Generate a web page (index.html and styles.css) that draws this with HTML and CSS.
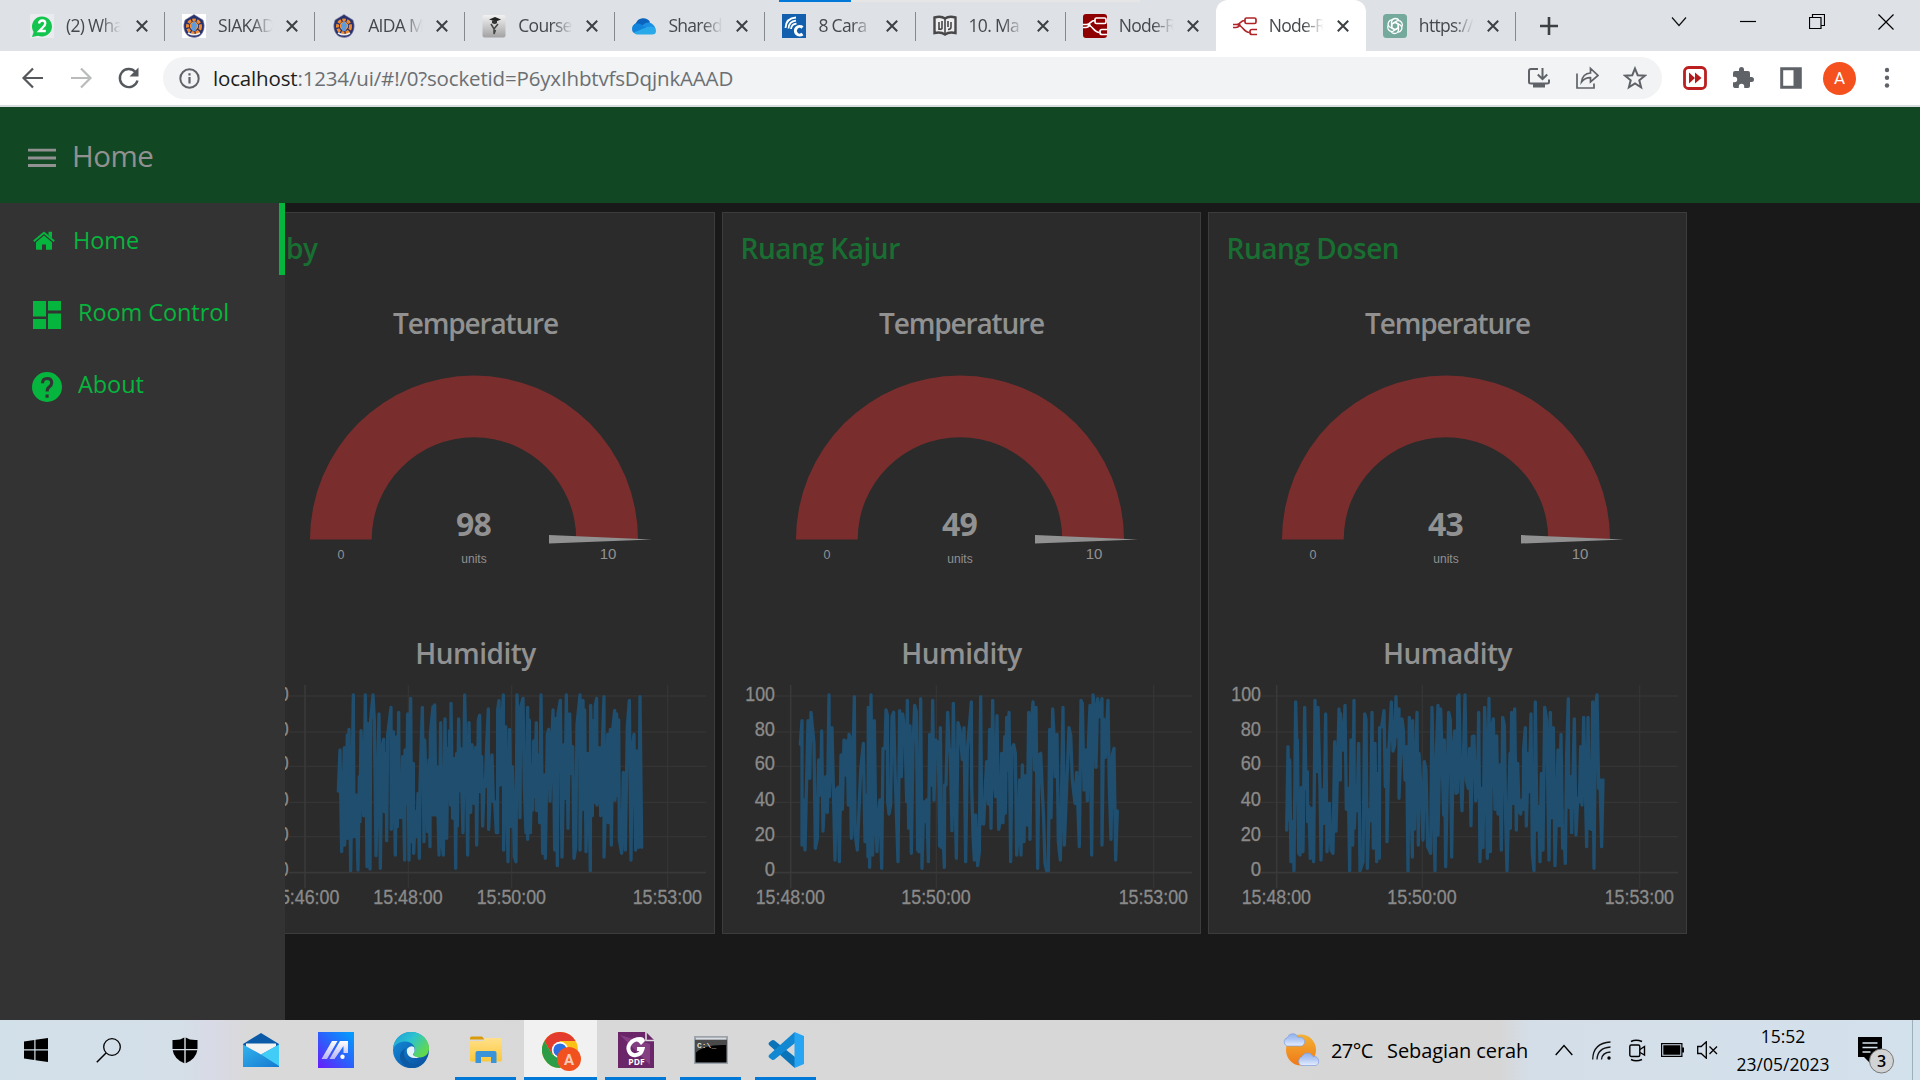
FILE: index.html
```html
<!DOCTYPE html>
<html lang="id">
<head>
<meta charset="utf-8">
<title>Node-RED Dashboard</title>
<link rel="stylesheet" href="styles.css">
</head>
<body>
<svg class="defs" width="0" height="0">
  <defs>
    <linearGradient id="gSun" x1="0" y1="0" x2="0" y2="1"><stop offset="0" stop-color="#f3b233"/><stop offset="1" stop-color="#f07818"/></linearGradient>
    <linearGradient id="gCloud" x1="0" y1="0" x2="0" y2="1"><stop offset="0" stop-color="#8fb0ec"/><stop offset=".5" stop-color="#b3c9f5"/><stop offset="1" stop-color="#e6eefc"/></linearGradient>
    <linearGradient id="gMa" x1="0" y1="1" x2="1" y2="0"><stop offset="0" stop-color="#6a1bfb"/><stop offset=".5" stop-color="#2b61fb"/><stop offset="1" stop-color="#00a2fd"/></linearGradient>
    <linearGradient id="gLetter" x1="0" y1="0" x2="0" y2="1"><stop offset="0" stop-color="#fff"/><stop offset="1" stop-color="#b9b4f5"/></linearGradient>
    <linearGradient id="gEdgeTop" x1="0" y1="0" x2="1" y2=".6"><stop offset="0" stop-color="#1d9bd8"/><stop offset=".5" stop-color="#2cc3d0"/><stop offset="1" stop-color="#62d84c"/></linearGradient>
    <linearGradient id="gEdgeBot" x1="0" y1="0" x2="1" y2="1"><stop offset="0" stop-color="#1391de"/><stop offset="1" stop-color="#0b4a9b"/></linearGradient>
    <linearGradient id="gFolder" x1="0" y1="0" x2="0" y2="1"><stop offset="0" stop-color="#ffe08a"/><stop offset="1" stop-color="#fbc83c"/></linearGradient>
    <linearGradient id="gMail" x1="0" y1="0" x2="1" y2="1"><stop offset="0" stop-color="#32b4ee"/><stop offset="1" stop-color="#1679d0"/></linearGradient>
    <linearGradient id="gFav" x1="0" y1="0" x2="0" y2="1"><stop offset="0" stop-color="#f2f2f2"/><stop offset="1" stop-color="#a2a2a2"/></linearGradient>
    <symbol id="x" viewBox="0 0 14 14"><path d="M1.8 1.8l10.4 10.4M12.2 1.8L1.8 12.2" stroke="#3c4043" stroke-width="2" fill="none"/></symbol>
    <symbol id="crest" viewBox="0 0 24 24"><path d="M12 .5l9 5.500q2 5 .8 9.500-1 4.500-5 7-4 1.800-9.600 0-4-2.500-5-7Q1 11 3 6z" fill="#26316f" stroke="#8d8ba8" stroke-width=".6"/><circle cx="12" cy="12.500" r="6.500" fill="none" stroke="#f08a2c" stroke-width="3" stroke-dasharray="3.400 1.300"/><circle cx="12" cy="12" r="4.200" fill="#f7943c"/><path d="M12 7l3 4-1.400 6h-3.200L9 11z" fill="#5b9be0"/><path d="M6 19q6 3.500 12 0" stroke="#eee" stroke-width="1.500" fill="none"/></symbol>
    <symbol id="nodes" viewBox="0 0 24 24"><g fill="none" stroke="currentColor" stroke-width="1.700"><rect x="12" y="4" width="11" height="5.500" rx="1.500"/><path d="M0 10.500h3.500c5 0 3-4 8.500-4M3.500 10.500c6 0 7 8 13 8M0 13.500h3c3 0 3-2 4.500-3"/><path d="M24 15.500h-5q-2 0-2 2v1q0 2 2 2h5"/></g></symbol>
  </defs>
</svg>

<header class="tabstrip">
  <span class="progress"><i></i></span>
  <div class="tab first"><svg class="fav" viewBox="0 0 24 24"><path d="M0 0h24v24H0z" fill="#fff" opacity=".35"/><path d="M2 23l1.600-5A10 10 0 1 1 8 21.700z" fill="#13c54e"/><path d="M9 9.500q.5-3 3.300-3 3 0 3 2.700 0 2-2.600 4.300L9.300 17h6.500" fill="none" stroke="#fff" stroke-width="2.300"/></svg><span class="name">(2) Wha</span><svg class="close"><use href="#x"/></svg></div>
  <div class="tab"><svg class="fav onwhite"><use href="#crest"/></svg><span class="name">SIAKAD</span><svg class="close"><use href="#x"/></svg></div>
  <div class="tab"><svg class="fav"><use href="#crest"/></svg><span class="name">AIDA M</span><svg class="close"><use href="#x"/></svg></div>
  <div class="tab"><svg class="fav" viewBox="0 0 24 24"><rect x=".5" y="1" width="23" height="22.500" rx="2" fill="url(#gFav)"/><path d="M7 5.500L13 3l6 2.500-5 2z" fill="#222"/><path d="M10 6.500v2.500q3 2 5 0V6.500z" fill="#333"/><path d="M9 10l3 5 4-5M12 15v5l1.500-4" fill="none" stroke="#444" stroke-width="1.500"/></svg><span class="name">Course</span><svg class="close"><use href="#x"/></svg></div>
  <div class="tab"><svg class="fav" viewBox="0 0 24 24"><path d="M3 17a5 5 0 0 1 1-8 8 8 0 0 1 14-1l-6 9z" fill="#0b63bd"/><path d="M0 15q0-5 5-5.500 4-.5 8 4l8 6H5q-5 0-5-4.500z" fill="#1283da"/><path d="M17 8.500q5 1 6.500 6.500l-8-1L10 12q3-4 7-3.500z" fill="#1b8fe3"/><path d="M2 18.500L15 13q9-2 9 4 0 3.500-4 3.500H5q-2 0-3-2z" fill="#29a9ea"/></svg><span class="name">Shared</span><svg class="close"><use href="#x"/></svg></div>
  <div class="tab"><svg class="fav" viewBox="0 0 24 24"><path d="M0 0h24v24H0z" fill="#1260ad"/><g fill="none" stroke="#fff"><path d="M20.500 13.500a4.300 4.300 0 1 0 0 6.500" stroke-width="3"/><path d="M3.500 14Q4 4 14 3.500M6.500 14.500Q7 7.500 14 6.700M9 15q.5-5 5.500-5.400" stroke-width="1.800"/></g></svg><span class="name">8 Cara</span><svg class="close"><use href="#x"/></svg></div>
  <div class="tab"><svg class="fav" viewBox="0 0 24 24"><path d="M1.500 3.500Q8 1.500 12 4.500q4-3 10.500-1V19Q16 17.500 12 20.500 8 17.500 1.500 19z" fill="#eee" stroke="#48484a" stroke-width="2.400"/><path d="M12 4.500v16M6 8v8M9 7v7.500q-1 1.500-3 0M15 7v6M18 8v5q0 2.500-3 2.500" fill="none" stroke="#48484a" stroke-width="1.600"/></svg><span class="name">10. Ma</span><svg class="close"><use href="#x"/></svg></div>
  <div class="tab last-before"><svg class="fav red"><use href="#nodes"/></svg><span class="name">Node-R</span><svg class="close"><use href="#x"/></svg></div>
  <div class="tab active"><svg class="fav redline"><use href="#nodes"/></svg><span class="name">Node-R</span><svg class="close"><use href="#x"/></svg></div>
  <div class="tab"><svg class="fav" viewBox="0 0 24 24"><rect width="24" height="24" rx="3.500" fill="#75a99c"/><g fill="none" stroke="#fff" stroke-width="1.300"><path id="petal" d="M12 8.500l3.500 2v5.500q-.5 3.500-4 3.500-2.500 0-3.500-2"/><use href="#petal" transform="rotate(60 12 12)"/><use href="#petal" transform="rotate(120 12 12)"/><use href="#petal" transform="rotate(180 12 12)"/><use href="#petal" transform="rotate(240 12 12)"/><use href="#petal" transform="rotate(300 12 12)"/></g></svg><span class="name">https://</span><svg class="close"><use href="#x"/></svg></div>
  <svg class="plus" viewBox="0 0 18 18"><path d="M9 0v18M0 9h18" stroke="#3c4043" stroke-width="2.600"/></svg>
  <div class="winctl">
    <svg width="16" height="44" viewBox="0 0 16 44"><path d="M1 17.500l7 8 7-8" fill="none" stroke="#111" stroke-width="1.200"/></svg>
    <svg width="16" height="44" viewBox="0 0 16 44"><path d="M0 21.500h16" stroke="#000" stroke-width="1.200"/></svg>
    <svg width="16" height="44" viewBox="0 0 16 44"><path d="M.5 17.500h11.500v11H.5zM3.500 17.500v-3h12v11H12" fill="none" stroke="#000" stroke-width="1.200"/></svg>
    <svg width="16" height="44" viewBox="0 0 16 44"><path d="M.5 14.500l15 15M15.500 14.500l-15 15" stroke="#000" stroke-width="1.200"/></svg>
  </div>
</header>

<nav class="toolbar">
  <svg class="back" viewBox="0 0 24 24"><path d="M22 12H3M12 2.500L2.500 12l9.500 9.500" fill="none" stroke="#55595d" stroke-width="2.200"/></svg>
  <svg class="fwd" viewBox="0 0 24 24"><path d="M2 12h19M12 2.500l9.500 9.500-9.500 9.500" fill="none" stroke="#b9bbbd" stroke-width="2.200"/></svg>
  <svg class="reload" viewBox="0 0 24 24"><path d="M20.500 14.500A9 9 0 1 1 18.500 6" fill="none" stroke="#55595d" stroke-width="2.400"/><path d="M21.500 1.500v9h-9z" fill="#55595d"/></svg>
  <div class="omnibox">
    <svg width="21" height="21" viewBox="0 0 21 21"><circle cx="10.500" cy="10.500" r="9.200" fill="none" stroke="#5f6368" stroke-width="2"/><path d="M10.500 9v6.500M10.500 5.200v2.300" stroke="#5f6368" stroke-width="2.200"/></svg>
    <span class="url"><b>localhost</b>:1234/ui/#!/0?socketid=P6yxIhbtvfsDqjnkAAAD</span>
    <span class="pageacts">
      <svg viewBox="0 0 24 24"><path d="M11 3H4q-2 0-2 2v11q0 1.500 2 1.500h16q2 0 2-1.500v-2.500M15.500 2v10M10.800 8.500l4.700 4.700 4.700-4.700" fill="none" stroke="#5f6368" stroke-width="2"/><path d="M6 18h12v3.500H6z" fill="#5f6368"/></svg>
      <svg viewBox="0 0 24 24"><path d="M2 7.500v14.500h17v-4.500M6.500 16q1-8.500 9-9V2.500l7.500 7-7.500 6.500v-4.300Q10 11.500 6.500 16z" fill="none" stroke="#5f6368" stroke-width="1.700"/></svg>
      <svg viewBox="0 0 24 24"><path d="M12 2.500l2.700 6.700 7.100.5-5.500 4.600 1.800 7L12 17.400l-6.100 3.900 1.800-7L2.200 9.700l7.100-.5z" fill="none" stroke="#5f6368" stroke-width="2"/></svg>
    </span>
  </div>
  <div class="exts">
    <svg viewBox="0 0 24 24"><rect x="1.500" y="1.500" width="21" height="21" rx="4" fill="#fff" stroke="#bb1f1f" stroke-width="2.800"/><path d="M6 6.500l6 5.500-6 5.500zM12 6.500l6.500 5.500-6.500 5.500z" fill="#b31c1c"/></svg>
    <svg viewBox="0 0 24 24"><path d="M20.500 11H19V7a2 2 0 0 0-2-2h-4V3.500a2.500 2.500 0 0 0-5 0V5H4a2 2 0 0 0-2 2v3.800h1.500a2.700 2.700 0 0 1 0 5.400H2V20a2 2 0 0 0 2 2h3.800v-1.500a2.700 2.700 0 0 1 5.400 0V22H17a2 2 0 0 0 2-2v-4h1.500a2.500 2.500 0 0 0 0-5z" fill="#5f6368"/></svg>
    <svg viewBox="0 0 24 24"><path d="M2.700 2.700h18.600v18.600H2.700z" fill="none" stroke="#5f6368" stroke-width="3"/><path d="M14.500 3h7v18h-7z" fill="#5f6368"/></svg>
    <span class="avatar">A</span>
    <svg viewBox="0 0 24 24"><g fill="#5f6368"><circle cx="12" cy="4" r="2.200"/><circle cx="12" cy="11.700" r="2.200"/><circle cx="12" cy="19.500" r="2.200"/></g></svg>
  </div>
</nav>

<section class="appbar">
  <svg width="28" height="20" viewBox="0 0 28 20"><path d="M0 2.200h28M0 10h28M0 17.500h28" stroke="#919191" stroke-width="2.800"/></svg>
  <h1>Home</h1>
</section>

<main class="stage">
  <aside class="menu">
    <a class="item on"><svg width="22" height="19" viewBox="0 0 22 19"><path d="M11 4.500l8 6.800V18q0 .8-.8.800H13v-5.300H9v5.300H3.800Q3 18.800 3 18v-6.700z" fill="#06b53d"/><path d="M.8 10.200L11 1.700l10.200 8.500" fill="none" stroke="#06b53d" stroke-width="2"/><path d="M15.500.800H19v6.500l-3.500-3z" fill="#06b53d"/></svg><span>Home</span></a>
    <a class="item"><svg width="28" height="28" viewBox="0 0 28 28"><path d="M0 0h13v15.500H0zM15 0h13v9.500H15zM0 18h13v10H0zM15 12.500h13V28H15z" fill="#06b53d"/></svg><span>Room Control</span></a>
    <a class="item about"><svg width="30" height="30" viewBox="0 0 30 30"><circle cx="15" cy="15" r="15" fill="#06b53d"/><path d="M10.500 11.200q0-4.700 4.700-4.700 4.500 0 4.500 4.300 0 2.200-2.300 4-2.300 1.700-2.300 4.700M15.100 22.500v3.300" fill="none" stroke="#333" stroke-width="3.100"/></svg><span>About</span></a>
  </aside>

  <article class="card">
    <h2>Loby</h2>
    <h3 class="t">Temperature</h3>
    <svg class="gauge" viewBox="0 0 477 265"><path class="arc" d="M73 178.500a164 164 0 0 1 328 0h-61.700a102.300 102.300 0 0 0-204.600 0z"/><path class="needle" d="M312 174l103 4.500-103 4z"/><text class="num" x="236.500" y="174.500">98</text><text class="unit" x="237" y="202">units</text><text class="min" x="104" y="198">0</text><text class="max" x="371" y="198">10</text></svg>
    <h3 class="h">Humidity</h3>
    <svg class="chart" viewBox="-129 180 1431 720">
      <path class="grid" d="M26 228H1278M26 336H1278M26 439H1278M26 547H1278M26 650H1278M385 195V805M695 195V805M1163 195V805"/><path class="axis" d="M75 195V805M26 758H1278"/>
      <g class="yl"><text x="26" y="242" textLength="85" lengthAdjust="spacingAndGlyphs">100</text><text x="26" y="347" textLength="58" lengthAdjust="spacingAndGlyphs">80</text><text x="26" y="450" textLength="58" lengthAdjust="spacingAndGlyphs">60</text><text x="26" y="559" textLength="58" lengthAdjust="spacingAndGlyphs">40</text><text x="26" y="662" textLength="58" lengthAdjust="spacingAndGlyphs">20</text><text x="26" y="769" textLength="28" lengthAdjust="spacingAndGlyphs">0</text></g>
      <g class="xl"><text x="74" y="853" textLength="208" lengthAdjust="spacingAndGlyphs">15:46:00</text><text x="384" y="853" textLength="208" lengthAdjust="spacingAndGlyphs">15:48:00</text><text x="694" y="853" textLength="208" lengthAdjust="spacingAndGlyphs">15:50:00</text><text x="1162" y="853" textLength="208" lengthAdjust="spacingAndGlyphs">15:53:00</text></g>
      <polyline points="175,513 180,390 185,695 193,383 194,675 202,345 203,655 207,328 212,752 220,225 222,650 228,525 234,750 238,470 240,605 243,332 251,587 256,225 261,740 263,310 270,747 272,300 279,225 283,300 288,707 297,282 301,745 306,380 311,358 313,575 318,400 320,662 323,345 333,262 334,628 340,335 346,705 350,350 352,620 356,277 358,592 365,592 368,410 374,720 375,390 380,550 383,282 387,720 392,235 395,665 400,430 401,700 406,575 411,650 414,520 418,715 420,500 427,262 432,665 434,360 443,635 447,420 450,680 451,343 459,260 460,585 464,255 468,585 471,440 477,705 482,308 485,660 490,705 495,297 500,655 504,385 506,500 509,332 512,555 513,250 518,595 524,415 527,745 530,400 532,618 536,297 540,512 542,385 549,638 554,225 560,500 563,705 567,308 572,577 576,374 582,550 587,382 590,675 595,300 599,286 601,515 605,410 608,618 613,480 616,500 620,374 625,267 626,628 636,405 640,545 644,545 649,638 653,638 653,270 657,242 661,495 666,300 670,225 671,690 677,320 684,725 689,328 694,620 697,440 700,540 703,710 708,725 711,225 717,400 720,593 722,262 729,235 733,500 738,638 743,262 743,658 748,300 751,638 756,435 758,570 761,363 763,530 769,308 770,572 776,405 779,608 783,225 788,700 793,465 796,715 802,343 806,328 810,543 814,405 819,270 824,690 828,295 832,737 834,282 841,241 846,711 852,374 855,535 859,225 864,625 869,282 873,460 878,380 882,715 887,683 891,313 900,225 900,690 909,241 911,568 914,270 918,695 924,400 931,752 932,256 937,587 938,302 943,547 946,256 950,235 951,555 959,383 962,587 968,343 972,230 972,711 979,470 983,343 985,608 991,328 994,675 998,330 1004,271 1005,540 1010,282 1011,527 1016,300 1018,660 1025,700 1030,457 1036,690 1042,320 1048,241 1053,720 1057,385 1062,343 1067,690 1071,393 1076,682 1080,230 1085,682"/>
    </svg>
  </article>

  <article class="card">
    <h2>Ruang Kajur</h2>
    <h3 class="t">Temperature</h3>
    <svg class="gauge" viewBox="0 0 477 265"><path class="arc" d="M73 178.500a164 164 0 0 1 328 0h-61.700a102.300 102.300 0 0 0-204.600 0z"/><path class="needle" d="M312 174l103 4.500-103 4z"/><text class="num" x="236.500" y="174.500">49</text><text class="unit" x="237" y="202">units</text><text class="min" x="104" y="198">0</text><text class="max" x="371" y="198">10</text></svg>
    <h3 class="h">Humidity</h3>
    <svg class="chart" viewBox="24 180 1431 720">
      <path class="grid" d="M178 228H1431M178 336H1431M178 439H1431M178 547H1431M178 650H1431M664 195V805M1316 195V805"/><path class="axis" d="M227 195V805M178 758H1431"/>
      <g class="yl"><text x="180" y="242" textLength="89" lengthAdjust="spacingAndGlyphs">100</text><text x="180" y="347" textLength="61" lengthAdjust="spacingAndGlyphs">80</text><text x="180" y="450" textLength="61" lengthAdjust="spacingAndGlyphs">60</text><text x="180" y="559" textLength="61" lengthAdjust="spacingAndGlyphs">40</text><text x="180" y="662" textLength="61" lengthAdjust="spacingAndGlyphs">20</text><text x="180" y="769" textLength="31" lengthAdjust="spacingAndGlyphs">0</text></g>
      <g class="xl"><text x="226" y="853" textLength="208" lengthAdjust="spacingAndGlyphs">15:48:00</text><text x="663" y="853" textLength="208" lengthAdjust="spacingAndGlyphs">15:50:00</text><text x="1315" y="853" textLength="208" lengthAdjust="spacingAndGlyphs">15:53:00</text></g>
      <polyline points="256,373 261,302 261,675 266,540 270,690 279,302 284,475 288,277 297,370 301,685 307,655 311,420 317,525 320,333 324,633 332,470 337,577 342,225 343,530 351,323 360,720 364,510 369,502 373,725 378,405 382,568 387,360 392,465 396,362 400,555 402,343 405,350 409,655 418,230 420,640 427,690 437,450 445,370 450,665 455,525 459,710 460,262 464,742 468,225 473,705 478,302 482,600 486,695 490,580 495,540 500,745 504,385 510,385 513,270 517,285 518,545 522,582 527,555 531,290 536,277 540,450 549,725 554,272 559,470 563,282 570,340 575,545 577,241 581,625 585,318 589,700 594,380 599,256 604,275 608,690 612,695 617,236 621,745 626,545 631,605 635,540 640,725 644,343 650,495 653,241 657,540 662,360 670,370 674,678 676,323 680,683 684,640 688,742 689,495 693,495 698,277 702,380 706,400 711,632 715,250 724,715 729,308 735,330 742,418 747,323 752,725 757,390 765,297 769,246 770,500 774,640 778,720 782,585 788,737 793,695 797,230 800,610 806,612 812,480 815,425 820,552 824,328 828,625 833,241 837,480 842,530 846,287 851,628 856,600 860,400 864,608 869,350 871,580 875,292 878,450 882,277 887,725 891,385 896,374 901,400 905,705 910,640 914,480 918,705 922,435 927,665 931,467 937,615 941,277 945,658 949,310 954,246 959,450 963,262 968,745 972,405 977,400 981,490 986,600 990,730 995,752 1000,752 1004,328 1008,593 1013,267 1017,345 1021,470 1026,343 1030,665 1036,720 1044,262 1048,675 1055,500 1062,323 1067,345 1072,480 1080,550 1085,457 1093,680 1098,241 1102,250 1107,510 1112,390 1117,542 1121,350 1125,256 1130,705 1134,225 1139,262 1143,442 1148,236 1155,290 1161,236 1161,675 1166,297 1171,412 1179,241 1183,500 1188,658 1192,405 1197,385 1202,720 1207,573"/>
    </svg>
  </article>

  <article class="card">
    <h2>Ruang Dosen</h2>
    <h3 class="t">Temperature</h3>
    <svg class="gauge" viewBox="0 0 477 265"><path class="arc" d="M73 178.500a164 164 0 0 1 328 0h-61.700a102.300 102.300 0 0 0-204.600 0z"/><path class="needle" d="M312 174l103 4.500-103 4z"/><text class="num" x="236.500" y="174.500">43</text><text class="unit" x="237" y="202">units</text><text class="min" x="104" y="198">0</text><text class="max" x="371" y="198">10</text></svg>
    <h3 class="h">Humadity</h3>
    <svg class="chart" viewBox="27 180 1431 720">
      <path class="grid" d="M181 228H1434M181 336H1434M181 439H1434M181 547H1434M181 650H1434M667 195V805M1319 195V805"/><path class="axis" d="M230 195V805M181 758H1434"/>
      <g class="yl"><text x="183" y="242" textLength="89" lengthAdjust="spacingAndGlyphs">100</text><text x="183" y="347" textLength="61" lengthAdjust="spacingAndGlyphs">80</text><text x="183" y="450" textLength="61" lengthAdjust="spacingAndGlyphs">60</text><text x="183" y="559" textLength="61" lengthAdjust="spacingAndGlyphs">40</text><text x="183" y="662" textLength="61" lengthAdjust="spacingAndGlyphs">20</text><text x="183" y="769" textLength="31" lengthAdjust="spacingAndGlyphs">0</text></g>
      <g class="xl"><text x="229" y="853" textLength="208" lengthAdjust="spacingAndGlyphs">15:48:00</text><text x="666" y="853" textLength="208" lengthAdjust="spacingAndGlyphs">15:50:00</text><text x="1318" y="853" textLength="208" lengthAdjust="spacingAndGlyphs">15:53:00</text></g>
      <polyline points="260,630 264,380 268,600 269,420 273,725 278,605 282,752 287,246 291,400 292,360 296,700 300,705 304,502 309,695 314,262 318,505 322,455 323,605 327,560 331,715 336,565 341,725 345,241 350,455 354,262 360,500 363,720 367,510 372,610 377,282 381,695 388,550 393,690 399,700 404,365 408,633 417,267 421,480 421,280 430,390 435,256 439,568 445,505 449,752 453,360 458,675 462,241 463,625 467,500 471,572 476,370 480,752 489,725 494,282 498,297 502,745 507,570 512,602 516,277 520,685 525,370 530,725 534,460 538,715 539,323 545,320 552,272 556,500 560,390 561,665 566,400 574,246 579,393 584,375 588,230 591,350 597,267 597,535 606,297 610,330 615,480 620,380 624,752 628,292 637,711 638,302 643,628 651,277 655,675 657,400 665,540 669,660 673,425 678,450 683,680 692,700 696,262 705,752 709,400 714,256 714,645 722,267 731,585 733,360 737,740 746,277 751,300 755,711 759,400 764,333 768,520 772,517 773,230 777,225 781,450 786,572 795,225 799,480 805,505 809,385 813,617 817,350 822,348 827,542 833,500 836,277 840,725 845,505 849,683 854,262 858,400 862,715 867,235 871,695 876,320 880,297 885,568 890,348 894,582 899,435 904,690 908,292 913,315 917,600 921,752 926,560 930,400 931,625 935,277 940,550 944,267 949,630 953,430 957,570 962,582 966,540 970,568 971,385 976,323 979,618 985,400 988,515 993,282 997,700 1002,752 1006,246 1011,630 1016,560 1020,725 1024,460 1029,690 1034,262 1040,300 1047,720 1051,277 1056,593 1060,323 1065,737 1070,560 1074,390 1078,617 1083,343 1088,685 1092,640 1096,730 1100,400 1105,236 1106,562 1111,470 1115,638 1123,297 1128,645 1133,535 1138,545 1142,380 1146,555 1151,292 1160,680 1164,292 1169,625 1174,628 1178,246 1182,745 1187,257 1191,225 1196,505 1200,480 1205,680 1209,480"/>
    </svg>
  </article>
</main>

<footer class="taskbar">
  <div class="apps">
    <span class="app s"><svg width="24" height="24" viewBox="0 0 24 24"><path d="M0 3.500L10.300 2v9.300H0zM11.500 1.800L24 0v11.300H11.500zM0 12.500h10.300V22L0 20.500zM11.500 12.500H24V24l-12.500-1.800z"/></svg></span>
    <span class="app s"><svg width="25" height="25" viewBox="0 0 25 25"><circle cx="16" cy="9" r="8.300" fill="none" stroke="#000" stroke-width="1.300"/><path d="M10 15L.8 24.200" stroke="#000" stroke-width="1.500"/></svg></span>
    <span class="app shield"><svg width="26" height="27" viewBox="0 0 26 27"><path d="M.5 3Q8 3.500 12.300.500V12H.5zM13.700.500Q18 3.500 25.500 3v9H13.700zM.7 13.300h11.600v13Q2 22 .7 13.300zM13.700 13.300h11.600Q24 22 13.700 26.300z"/></svg></span>
    <span class="app"><svg width="36" height="36" viewBox="0 0 36 36"><path d="M0 12L18 1l18 11v8H0z" fill="#0a5aa8"/><path d="M3 11.500h30V20L18 28 3 20z" fill="#f2f2f2"/><path d="M0 12.500l18 10 18-10V35H0z" fill="url(#gMail)"/><path d="M36 12.500L18 22.500 36 34z" fill="#42cdf7"/></svg></span>
    <span class="app"><svg width="36" height="36" viewBox="0 0 36 36"><path d="M0 0h36v36H0z" fill="url(#gMa)"/><path d="M3.500 27L14 9h5.500L9 27zM11.500 27L22 9h8v12h-4.500v-7L16.500 27z" fill="url(#gLetter)"/><circle cx="24.500" cy="24.800" r="2.200" fill="#fff"/></svg></span>
    <span class="app"><svg width="36" height="36" viewBox="0 0 36 36"><circle cx="18" cy="18" r="18" fill="url(#gEdgeBot)"/><path d="M0 17C1 6 9 0 18 0c11 0 18 8 18 16 0 6-4 9.500-9 9.500-4 0-6.500-1.500-6.500-3s1.500-2 1.500-5c0-4-4-8-9.500-8C7 9.500 2 12 0 17z" fill="url(#gEdgeTop)"/><path d="M14 17q3-4 7-2 1.500 4-.5 6.500t5.500 4q-6 1.500-9.500-1T14 17z" fill="#e3f3f8"/><path d="M12.500 16q-4 8 3 14t18-2.500q-6 10-17 8.400Q4 31 8 20z" fill="#0c59a4"/></svg></span>
    <span class="app run"><svg width="32" height="28" viewBox="0 0 32 28"><path d="M0 2Q0 .5 1.500.5H12l2.500 3H0z" fill="#d99b09"/><path d="M0 5h13l2-3h15.500Q32 2 32 3.500V24q0 1.500-1.500 1.500h-29Q0 25.500 0 24z" fill="url(#gFolder)"/><path d="M5.500 27V17q0-2 2-2h17q2 0 2 2v10H21v-6H11v6z" fill="#3b93da"/></svg></span>
    <span class="app run cur"><svg width="40" height="40" viewBox="0 0 40 40"><circle cx="18" cy="18" r="18" fill="#fbc116"/><path d="M2.400 9A18 18 0 0 1 33.600 9H18l-7.800 13.500z" fill="#e33b2e"/><path d="M2.400 9A18 18 0 0 0 18 36l7.800-13.500H10.200z" fill="#2a9d46"/><circle cx="18" cy="18" r="8.200" fill="#fff"/><circle cx="18" cy="18" r="6.600" fill="#2b6fe0"/><circle cx="27" cy="27" r="12" fill="#f1511f"/><text x="27" y="32.500" class="badgeA">A</text></svg></span>
    <span class="app run"><svg width="36" height="36" viewBox="0 0 36 36"><path d="M0 0h28l8 8v28H0z" fill="#6a2669"/><path d="M2 3l30 30V12z" fill="#843f83"/><path d="M28 0v8.500h8" fill="none" stroke="#ddd" stroke-width="1.600"/><path d="M22 8.500Q18 6 14 9.500 9 14 11 19t7 4q5-.5 6.500-6H19" fill="none" stroke="#fff" stroke-width="4"/><path d="M17 6q9-3 10 3l-4 4z" fill="#fff"/><text x="18.500" y="33.300" class="pdf">PDF</text></svg></span>
    <span class="app run"><svg width="34" height="28" viewBox="0 0 34 28"><path d="M.7.700h32.600v26.600H.7z" fill="#000" stroke="#9ba3ab" stroke-width="1.500"/><path d="M1.400 1.300h31.200v2.500H1.400z" fill="#d8dde3"/><path d="M1.500 4h31v5Q10 8 1.500 17z" fill="#4a4a4a"/><text x="3" y="11.500" class="cmd">C:\_</text></svg></span>
    <span class="app run"><svg width="36" height="36" viewBox="0 0 36 36"><path d="M1 10.500l3-2.300q1.500-.5 2.500.3L27 25v10.500Q26.500 36 25 34.500L1 13q-1-1.200 0-2.500z" fill="#0b73b8"/><path d="M1 25.500l3 2.300q1.500.5 2.500-.3L27 11V.500Q26 0 25 1.500L1 23q-1 1.200 0 2.500z" fill="#1288d2"/><path d="M26.500 0L36 4v28l-9.500 4z" fill="#27a5f2"/></svg></span>
  </div>
  <div class="tray">
    <svg width="37" height="36" viewBox="0 0 37 36"><ellipse cx="18" cy="18" rx="15" ry="15.500" fill="url(#gSun)"/><path d="M4 14a4.500 4.500 0 0 1 .5-8.500 5.500 5.500 0 0 1 10.500 0A4.500 4.500 0 0 1 19 14z" fill="url(#gCloud)" stroke="#7f9fe0" stroke-width=".7"/><path d="M18 33.500a5 5 0 0 1 1-9 6 6 0 0 1 11 0 4.800 4.800 0 0 1 3 9z" fill="url(#gCloud)" stroke="#7f9fe0" stroke-width=".7"/></svg>
    <span class="temp">27°C</span><span class="sky">Sebagian cerah</span>
    <svg class="up" width="18" height="12" viewBox="0 0 18 12"><path d="M.7 11L9 1.500 17.300 11" fill="none" stroke="#000" stroke-width="1.400"/></svg>
    <svg class="wifi" width="19" height="19" viewBox="0 0 19 19"><g fill="none" stroke="#111" stroke-width="1.300"><path d="M.7 18.500Q1 2 18.500 1M5 18.500Q5.500 7 18.500 6M9.500 18.500q.5-7 9-7.500"/></g><circle cx="17" cy="17" r="1.700"/></svg>
    <svg class="cam" width="17" height="23" viewBox="0 0 17 23"><g fill="none" stroke="#000" stroke-width="1.400"><rect x=".8" y="6" width="10" height="11.500" rx="1.500"/><path d="M11 10.500l4.500-3v8.500L11 13.500M2 2.500Q7 0 13 2.500M2 20.500q5 2.500 11 0"/></g></svg>
    <svg class="bat" width="23" height="14" viewBox="0 0 23 14"><path d="M.6.600h20.300v12.800H.6z" fill="none" stroke="#000" stroke-width="1.200"/><path d="M2.300 2.300h17v9.400h-17zM21 4.500h2v5h-2z"/></svg>
    <svg class="mute" width="21" height="18" viewBox="0 0 21 18"><path d="M.7 5.500h3.500L9.300.800v16.400L4.200 12.500H.7zM12.500 5.500l7.500 7.500M20 5.500L12.500 13" fill="none" stroke="#000" stroke-width="1.300"/></svg>
    <span class="clock"><i>15:52</i><i>23/05/2023</i></span>
    <svg class="note" width="36" height="40" viewBox="0 0 36 40"><path d="M0 0h24v20H12v6l-6-6H0z"/><path d="M4.500 6h15M4.500 10.500h15M4.500 15h8" stroke="#d5e2ec" stroke-width="1.300"/><circle cx="23.500" cy="24" r="12" fill="#d2d3d5" stroke="#777" stroke-width="1"/><text x="23.500" y="30" class="cnt">3</text></svg>
    <i class="peek"></i>
  </div>
</footer>
</body>
</html>
```
FILE: styles.css
```css
* { box-sizing: border-box; }
body { margin: 0; width: 1920px; height: 1080px; overflow: hidden; display: flex; flex-direction: column; background: #191919; font-family: "Open Sans", "Noto Sans", sans-serif; }
.defs { position: absolute; }
svg { display: block; flex: none; }
i { font-style: normal; }

/* browser tabs */
.tabstrip { position: relative; height: 51px; flex: none; display: flex; align-items: stretch; background: #dee1e6; padding-left: 15px; }
.progress { position: absolute; left: 779px; top: 0; width: 361px; height: 2px; background: #e6e6e6; z-index: 2; }
.progress i { display: block; width: 72px; height: 2px; background: #0078d7; }
.tab { position: relative; width: 150.100px; flex: none; display: flex; align-items: center; padding: 1px 0 0 17px; }
.tab::after { content: ""; position: absolute; right: 0; top: 12px; width: 1px; height: 29px; background: #85888c; }
.tab.last-before::after, .tab.active::after { display: none; }
.first { padding-left: 15px; }
.first .name { margin-right: 12px; }
.fav { width: 24px; height: 24px; margin-right: 12px; }
.onwhite { background: #fff; }
.red { background: #8f0000; border-radius: 3px; color: #fff; }
.redline { color: #b02428; }
.name { width: 57px; margin: -2px 10px 0 0; white-space: nowrap; font-size: 17.500px; letter-spacing: -0.700px; color: #45484c; -webkit-mask-image: linear-gradient(90deg, #000 60%, transparent 96%); mask-image: linear-gradient(90deg, #000 60%, transparent 96%); }
.close { width: 14px; height: 14px; }
.active { background: #fff; border-radius: 12px 12px 0 0; }
.plus { width: 18px; height: 18px; margin: 17px 0 0 24px; }
.winctl { margin-left: auto; display: flex; gap: 53px; padding-right: 26px; }

/* address bar */
.toolbar { height: 56px; flex: none; background: #fff; border-bottom: 2px solid #dadce0; display: flex; align-items: center; padding-left: 21px; }
.back, .fwd, .reload { width: 24px; height: 24px; margin-right: 24px; }
.reload { margin-right: 22px; }
.omnibox { width: 1499px; height: 42px; border-radius: 21px; background: #f1f3f4; display: flex; align-items: center; padding: 0 15px 0 16px; }
.url { margin-left: 13px; font-size: 20.500px; letter-spacing: -0.160px; color: #6b6f73; white-space: nowrap; }
.url b { font-weight: 400; color: #1c1e20; }
.pageacts { margin-left: auto; display: flex; gap: 24px; }
.pageacts svg { width: 24px; height: 24px; }
.exts { display: flex; align-items: center; padding-left: 21px; gap: 24px; }
.exts svg { width: 24px; height: 24px; }
.avatar { width: 33px; height: 33px; border-radius: 50%; background: #f4511e; color: #fff; font: 17px/33px "Roboto", sans-serif; text-align: center; margin: 0 -5px 0 -4px; }

/* dashboard header */
.appbar { height: 96px; flex: none; background: #124724; display: flex; align-items: center; padding: 6px 0 0 28px; }
.appbar h1 { margin: -4px 0 0 16px; font-size: 29.500px; line-height: 40px; font-weight: 400; color: #919191; letter-spacing: -0.500px; }

/* dashboard body */
.stage { position: relative; height: 817px; flex: none; display: flex; gap: 7px; padding: 9px 0 0 236px; background: #191919; }
.menu { position: absolute; left: 0; top: 0; width: 285px; height: 817px; background: #333; }
.item { height: 72px; display: flex; align-items: center; padding-left: 33px; color: #06b53d; font-size: 23.500px; }
.item span { margin: 2px 0 0 17px; white-space: nowrap; letter-spacing: -0.080px; }
.item svg { margin-top: 8px; }
.item.on { border-right: 6px solid #06b53d; }
.item.on svg { margin-top: 2px; }
.item.on span { margin-left: 18px; }
.item.about { padding-left: 32px; }
.item.about span { margin-left: 16px; }
.card { width: 479px; height: 722px; flex: none; background: #2b2b2b; border: 1px solid #3c3c3c; display: flex; flex-direction: column; }
.card h2, .card h3 { margin: 0; font-weight: 600; font-size: 28px; white-space: nowrap; }
.card h2 { height: 72px; line-height: 71px; padding-left: 17.500px; color: #186f31; letter-spacing: -0.450px; }
.card h3 { text-align: center; color: #919191; letter-spacing: -0.500px; }
.card .t { height: 76px; line-height: 77px; letter-spacing: -1.150px; }
.card .h { height: 54px; line-height: 54px; }
.gauge { width: 477px; height: 265px; }
.arc { fill: #792e2d; }
.needle { fill: #919191; }
.gauge text { text-anchor: middle; fill: #919191; font-family: "Liberation Sans", Arial, sans-serif; }
.gauge .num { font: 700 32px "Open Sans", sans-serif; letter-spacing: -0.800px; }
.gauge .unit { font-size: 12px; }
.gauge .min { font-size: 12.500px; }
.gauge .max { font-size: 15px; }
.chart { width: 477px; height: 240px; }
.chart text { font-family: "Liberation Sans", Arial, sans-serif; font-size: 60px; fill: #8a8a8a; stroke: #8a8a8a; stroke-width: 1px; }
.yl { text-anchor: end; }
.xl { text-anchor: middle; }
.grid { stroke: #343434; stroke-width: 4; fill: none; }
.axis { stroke: #393939; stroke-width: 5; fill: none; }
.chart polyline { fill: none; stroke: #1f4e6e; stroke-width: 10; stroke-linejoin: round; stroke-linecap: round; }

/* taskbar */
.taskbar { height: 60px; flex: none; display: flex; justify-content: space-between; background: linear-gradient(90deg, #d2e0ea 0, #d4dfe8 180px, #d8dae6 210px, #d9d9d9 250px, #d6d6d6 1500px, #d4dee8 1530px, #d3e1ec 1900px); }
.apps { display: flex; }
.app { width: 75px; height: 60px; display: flex; align-items: center; justify-content: center; }
.app.s { width: 72px; }
.app.shield { margin: 0 1px 0 3px; }
.run { background: linear-gradient(#0078d7, #0078d7) no-repeat 50% 100% / 61px 3px; }
.run.cur { width: 73px; margin: 0 1px; background: linear-gradient(#0078d7, #0078d7) no-repeat 0 100% / 100% 3px, #f1f1f1; padding-left: 3px; padding-top: 4px; }
.badgeA { font: 700 15px "Roboto", sans-serif; fill: #f7c9b8; text-anchor: middle; }
.pdf { font: 700 8.500px "Open Sans", sans-serif; fill: #fff; text-anchor: middle; }
.cmd { font: 700 8px "Liberation Mono", monospace; fill: #ddd; }
.tray { display: flex; align-items: center; width: 637px; font-size: 20px; color: #000; white-space: nowrap; }
.temp { margin-left: 11px; width: 56px; letter-spacing: -0.600px; }
.sky { width: 141px; letter-spacing: -0.080px; }
.up { margin-left: 27px; }
.wifi { margin-left: 19px; }
.cam { margin-left: 18px; }
.bat { margin-left: 15px; }
.mute { margin-left: 13px; }
.clock { width: 130px; display: flex; flex-direction: column; text-align: center; font-size: 17.500px; line-height: 28px; letter-spacing: 0; }
.note { margin: 14px 0 0 10px; }
.cnt { font: 600 16px "Open Sans", sans-serif; text-anchor: middle; }
.peek { margin-left: 18px; width: 1px; height: 60px; background: #9fb0bd; }
```
